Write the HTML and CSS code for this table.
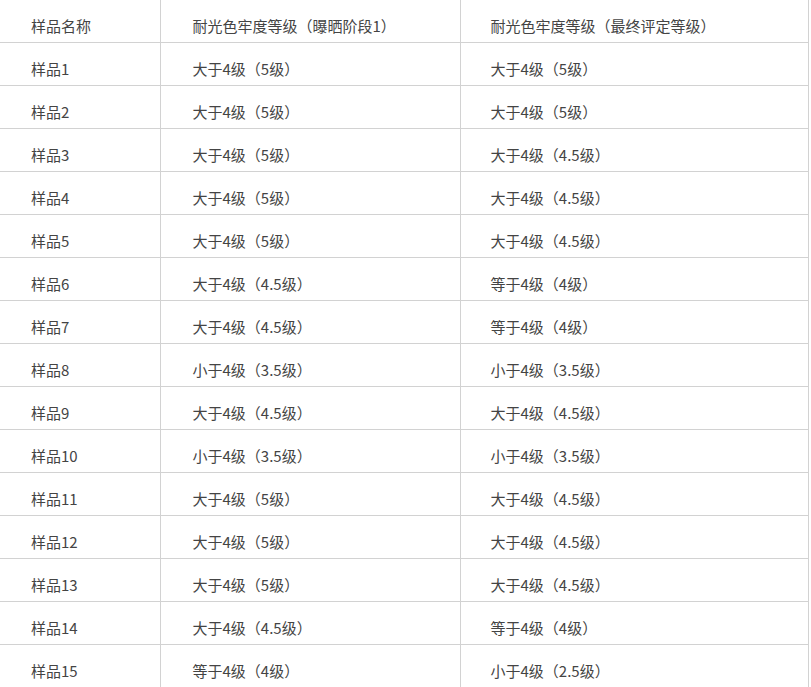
FILE: index.html
```html
<!DOCTYPE html>
<html lang="zh">
<head>
<meta charset="utf-8">
<link rel="stylesheet" href="styles.css">
</head>
<body>
<table class="grade-table">
  <colgroup>
    <col class="c1"><col class="c2"><col class="c3">
  </colgroup>
  <tr><td>样品名称</td><td>耐光色牢度等级（曝晒阶段1）</td><td>耐光色牢度等级（最终评定等级）</td></tr>
  <tr><td>样品1</td><td>大于4级（5级）</td><td>大于4级（5级）</td></tr>
  <tr><td>样品2</td><td>大于4级（5级）</td><td>大于4级（5级）</td></tr>
  <tr><td>样品3</td><td>大于4级（5级）</td><td>大于4级（4.5级）</td></tr>
  <tr><td>样品4</td><td>大于4级（5级）</td><td>大于4级（4.5级）</td></tr>
  <tr><td>样品5</td><td>大于4级（5级）</td><td>大于4级（4.5级）</td></tr>
  <tr><td>样品6</td><td>大于4级（4.5级）</td><td>等于4级（4级）</td></tr>
  <tr><td>样品7</td><td>大于4级（4.5级）</td><td>等于4级（4级）</td></tr>
  <tr><td>样品8</td><td>小于4级（3.5级）</td><td>小于4级（3.5级）</td></tr>
  <tr><td>样品9</td><td>大于4级（4.5级）</td><td>大于4级（4.5级）</td></tr>
  <tr><td>样品10</td><td>小于4级（3.5级）</td><td>小于4级（3.5级）</td></tr>
  <tr><td>样品11</td><td>大于4级（5级）</td><td>大于4级（4.5级）</td></tr>
  <tr><td>样品12</td><td>大于4级（5级）</td><td>大于4级（4.5级）</td></tr>
  <tr><td>样品13</td><td>大于4级（5级）</td><td>大于4级（4.5级）</td></tr>
  <tr><td>样品14</td><td>大于4级（4.5级）</td><td>等于4级（4级）</td></tr>
  <tr><td>样品15</td><td>等于4级（4级）</td><td>小于4级（2.5级）</td></tr>
</table>
</body>
</html>
```

FILE: styles.css
```css
html, body {
  margin: 0;
  padding: 0;
  background: #ffffff;
}
.grade-table {
  border-collapse: collapse;
  table-layout: fixed;
  width: 808px;
  font-family: "Noto Sans CJK SC", "Noto Sans", sans-serif;
  font-size: 15px;
  color: #444444;
}
.c1 { width: 160px; }
.c2 { width: 300px; }
.c3 { width: 348px; }
.grade-table td {
  height: 42px;
  box-sizing: border-box;
  padding: 15px 0 5px 31px;
  line-height: 22px;
  vertical-align: top;
  border-bottom: 1px solid #d2d2d2;
  border-right: 1px solid #d2d2d2;
  white-space: nowrap;
}
.grade-table td:nth-child(2) { padding-left: 32px; }
.grade-table td:nth-child(3) { padding-left: 30px; }
```
